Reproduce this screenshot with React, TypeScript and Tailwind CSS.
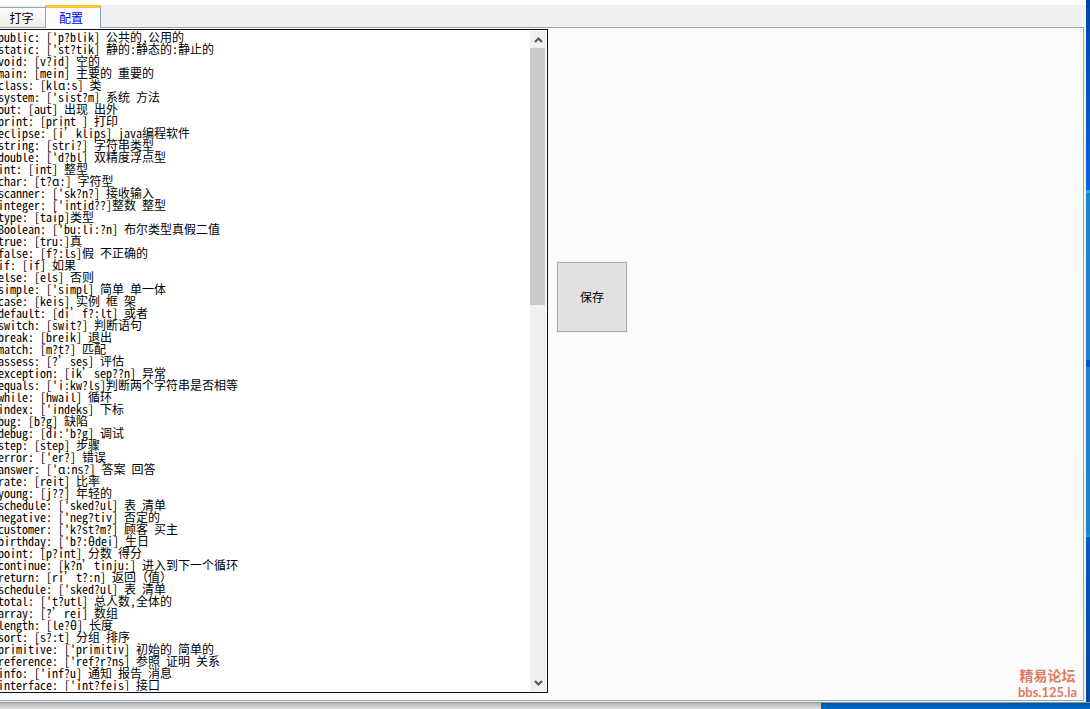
import React from 'react';
import { Tab, TabGroup, TabList, TabPanel, TabPanels } from '@headlessui/react';

const words = `public: ['p?blik] 公共的,公用的
static: ['st?tik] 静的:静态的:静止的
void: [v?id] 空的
main: [mein] 主要的 重要的
class: [klɑ:s] 类
system: ['sist?m] 系统 方法
out: [aut] 出现 出外
print: [print ] 打印
eclipse: [i’klips] java编程软件
string: [stri?] 字符串类型
double: ['d?bl] 双精度浮点型
int: [int] 整型
char: [t?ɑ:] 字符型
scanner: ['sk?n?] 接收输入
integer: ['intid??]整数 整型
type: [taip]类型
Boolean: ['bu:li:?n] 布尔类型真假二值
true: [tru:]真
false: [f?:ls]假 不正确的
if: [if] 如果
else: [els] 否则
simple: ['simpl] 简单 单一体
case: [keis] 实例 框 架
default: [di’f?:lt] 或者
switch: [swit?] 判断语句
break: [breik] 退出
match: [m?t?] 匹配
assess: [?’ses] 评估
exception: [ik’sep??n] 异常
equals: ['i:kw?ls]判断两个字符串是否相等
while: [hwail] 循环
index: ['indeks] 下标
bug: [b?g] 缺陷
debug: [di:'b?g] 调试
step: [step] 步骤
error: ['er?] 错误
answer: ['ɑ:ns?] 答案 回答
rate: [reit] 比率
young: [j??] 年轻的
schedule: ['sked?ul] 表 清单
negative: ['neg?tiv] 否定的
customer: ['k?st?m?] 顾客 买主
birthday: ['b?:θdei] 生日
point: [p?int] 分数 得分
continue: [k?n’tinju:] 进入到下一个循环
return: [ri’t?:n] 返回（值）
schedule: ['sked?ul] 表 清单
total: ['t?utl] 总人数,全体的
array: [?’rei] 数组
length: [le?θ] 长度
sort: [s?:t] 分组 排序
primitive: ['primitiv] 初始的 简单的
reference: ['ref?r?ns] 参照 证明 关系
info: ['inf?u] 通知 报告 消息
interface: ['int?feis] 接口`;

function Chevron({ down }: { down?: boolean }) {
  return (
    <svg viewBox="0 0 9 6" className={down ? 'w-[9px] h-[6px] rotate-180' : 'w-[9px] h-[6px]'}>
      <path d="M1 5 L4.5 1.5 L8 5" fill="none" stroke="#555555" strokeWidth="2" />
    </svg>
  );
}

function WordEditor() {
  return (
    <div className="flex flex-1 min-w-0 -ml-1 p-px border border-[#101010] bg-white">
      <textarea
        aria-label="单词"
        wrap="off"
        spellCheck={false}
        rows={55}
        defaultValue={words}
        className="flex-1 min-w-0 resize-none outline-none overflow-hidden text-[12px] leading-[12px] text-black font-['Noto_Sans_Mono_CJK_SC','Noto_Sans_CJK_SC',monospace]"
      />
      <div className="flex flex-col w-4 bg-[#f0f0f0]">
        <button type="button" aria-label="向上" className="flex h-[17px] items-center justify-center">
          <Chevron />
        </button>
        <div className="flex-1">
          <div className="w-[15px] h-[41%] bg-[#cacaca]"></div>
        </div>
        <button type="button" aria-label="向下" className="flex h-[17px] items-center justify-center">
          <Chevron down />
        </button>
      </div>
    </div>
  );
}

export default function App() {
  return (
    <div className="min-h-screen flex flex-col text-[12px] leading-4 text-black font-['Noto_Sans_CJK_SC',sans-serif]">
      <div className="flex flex-1">
        {/* Window */}
        <TabGroup defaultIndex={1} className="flex flex-col flex-1 min-w-0 bg-[#f0f0f0] pb-px">
          <div className="h-[5px] bg-white"></div>
          <TabList className="flex items-end h-[22px]">
            <Tab className="w-[45px] h-5 pr-0.5 border-t border-[#91a7b4] bg-gradient-to-b from-[#fdfdfd] to-[#eeeee6] outline-none">打字</Tab>
            <Tab className="relative z-10 w-14 h-[23px] -mb-px pr-1 border-x border-t-[3px] border-x-[#91a7b4] border-t-[#ffc237] bg-[#fcfcfe] text-[#0000ff] outline-none">配置</Tab>
          </TabList>
          <TabPanels className="flex flex-col flex-1 mr-0.5 border-t border-r border-b border-[#91a7b4] bg-[#fcfcfe]">
            <TabPanel className="hidden" />
            <TabPanel className="relative flex flex-1 pt-px pb-[7px] outline-none">
              <div className="flex w-[548px] shrink-0">
                <WordEditor />
              </div>
              <div className="flex flex-1 items-start pl-[9px] pt-[233px]">
                <button type="button" className="w-[70px] h-[70px] border border-[#adadad] bg-[#e1e1e1] ring-1 ring-[#f2f2f4]">
                  保存
                </button>
              </div>
              {/* Forum stamp over the panel */}
              <div className="absolute right-1.5 bottom-0 text-center text-[#e07a62]">
                <div className="text-[14px] leading-4 font-bold font-['Liberation_Sans','Noto_Sans_CJK_SC',sans-serif]">精易论坛</div>
                <div className="text-[13px] leading-4 font-bold font-['Lato',sans-serif]">bbs.125.la</div>
              </div>
            </TabPanel>
          </TabPanels>
        </TabGroup>
        {/* Desktop showing on the right */}
        <div className="flex flex-col w-1 bg-[#0a50b0]">
          <div className="flex-[190] bg-gradient-to-b from-[#0046a8] to-[#0a62dc]"></div>
          <div className="h-[3px] bg-[#20b4d8]"></div>
          <div className="flex-[167] bg-gradient-to-b from-[#1a86cc] to-[#1c80d0]"></div>
          <div className="h-[7px] bg-[#0058cc]"></div>
          <div className="flex-[167] bg-gradient-to-b from-[#1c80d0] to-[#1a86cc]"></div>
          <div className="h-[3px] bg-[#1898cc]"></div>
          <div className="flex-[165] bg-gradient-to-b from-[#0a58c4] to-[#0048a0]"></div>
        </div>
      </div>
      <div className="h-px bg-[#909498]"></div>
      <div className="flex h-1.5">
        <div className="w-[821px] bg-gradient-to-b from-[#b8b8b8] to-[#e0e0e0]"></div>
        <div className="flex-1 bg-gradient-to-b from-[#0058a8] to-[#0068c4]"></div>
      </div>
    </div>
  );
}
